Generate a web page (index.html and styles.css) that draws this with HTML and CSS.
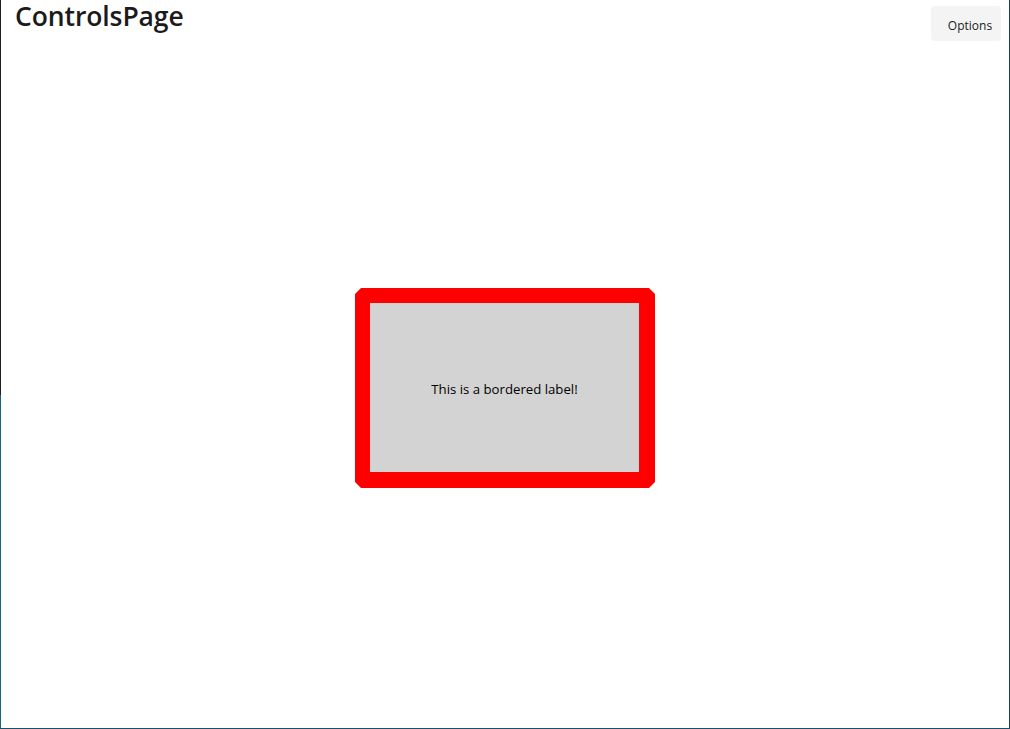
FILE: index.html
```html
<!DOCTYPE html>
<html>
<head>
<meta charset="utf-8">
<link rel="stylesheet" href="styles.css">
</head>
<body>
<div class="window">
  <div class="edge-left"></div>
  <div class="main">
    <header class="header">
      <h1 class="title">ControlsPage</h1>
      <button class="options">Options</button>
    </header>
    <div class="content">
      <div class="frame">
        <div class="label">This is a bordered label!</div>
      </div>
    </div>
  </div>
  <div class="edge-right"></div>
</div>
</body>
</html>
```
FILE: styles.css
```css
html, body {
  margin: 0;
  padding: 0;
  width: 1010px;
  height: 729px;
  overflow: hidden;
  background: #ffffff;
}
.window {
  display: flex;
  width: 1010px;
  height: 729px;
  box-sizing: border-box;
  border-bottom: 1px solid #1b4f6e;
}
.edge-left {
  width: 1px;
  flex: none;
  background: linear-gradient(to bottom, #202020 0, #202020 395px, #17657d 395px, #17657d 100%);
}
.edge-right {
  width: 1px;
  flex: none;
  background: #1e3a5f;
}
.main {
  flex: 1;
  display: flex;
  flex-direction: column;
  min-width: 0;
}
.header {
  height: 48px;
  flex: none;
  display: flex;
  justify-content: space-between;
  align-items: flex-start;
  padding: 0 8px 0 14px;
}
.title {
  margin: 0;
  font-family: "Open Sans", "Noto Sans", sans-serif;
  font-weight: 600;
  font-size: 26.5px;
  line-height: 33px;
  color: #1b1b1b;
  letter-spacing: -0.1px;
}
.options {
  margin-top: 6px;
  width: 70px;
  height: 35px;
  border: none;
  border-radius: 4px;
  background: #f4f4f4;
  font-family: "Open Sans", "Noto Sans", sans-serif;
  font-size: 12px;
  color: #1b1b1b;
  padding: 3px 0 0 8px;
}
.content {
  flex: 1;
  display: flex;
  align-items: center;
  justify-content: center;
}
.frame {
  width: 300px;
  height: 200px;
  box-sizing: border-box;
  padding: 15px 16px 16px 15px;
  background: #ff0000;
  clip-path: polygon(6px 0, calc(100% - 6px) 0, 100% 6px, 100% calc(100% - 6px), calc(100% - 6px) 100%, 6px 100%, 0 calc(100% - 6px), 0 6px);
  display: flex;
}
.label {
  flex: 1;
  background: #d3d3d3;
  display: flex;
  align-items: center;
  justify-content: center;
  font-family: "Open Sans", "Noto Sans", sans-serif;
  font-size: 13.2px;
  color: #000000;
  padding-top: 2px;
}
```
